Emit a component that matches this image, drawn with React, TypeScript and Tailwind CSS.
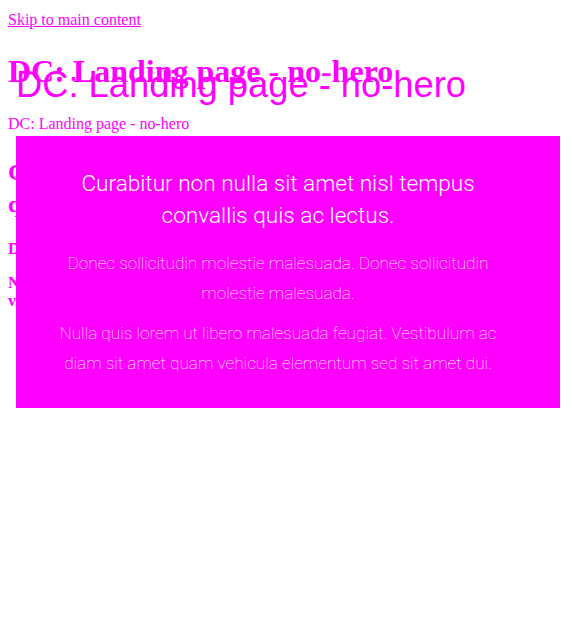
export default function App() {
  return (
    <div className="relative min-h-[630px] bg-white p-2 font-['Liberation_Serif',serif] leading-[normal] text-[#ff00ff]">
      <a href="#main" className="text-base underline">
        Skip to main content
      </a>
      <h1 className="my-[21.44px] text-[32px] font-bold">DC: Landing page - no-hero</h1>
      <p className="mb-4 text-base">DC: Landing page - no-hero</p>

      <main id="main">
        <h2 className="my-[19.92px] text-2xl font-bold">
          Curabitur non nulla sit amet nisl tempus convallis quis ac lectus.
        </h2>
        <p className="my-4 font-bold">Donec sollicitudin molestie malesuada.</p>
        <p className="my-4 font-bold">
          Nulla quis lorem ut libero malesuada feugiat. Vestibulum ac diam sit amet quam vehicula
          elementum sed sit amet dui.
        </p>
      </main>

      {/* overlay block sitting on top of the page flow */}
      <div className="absolute left-4 right-4 top-[67px] font-['Liberation_Sans',sans-serif]">
        <div className="text-[36.3px] leading-9">DC: Landing page - no-hero</div>
        <section className="mt-[33px] bg-[#ff00ff] pb-[30px] pl-10 pr-[60px] pt-8 text-center font-['Roboto',sans-serif] text-white">
          <h2 className="text-[22.6px] font-light leading-8">
            Curabitur non nulla sit amet nisl tempus convallis quis ac lectus.
          </h2>
          <p className="mt-4 text-[17.2px] font-thin leading-[30px]">
            Donec sollicitudin molestie malesuada. Donec sollicitudin molestie malesuada.
          </p>
          <p className="mt-[10px] text-[17.2px] font-thin leading-[30px]">
            Nulla quis lorem ut libero malesuada feugiat. Vestibulum ac diam sit amet quam vehicula
            elementum sed sit amet dui.
          </p>
        </section>
      </div>
    </div>
  );
}
